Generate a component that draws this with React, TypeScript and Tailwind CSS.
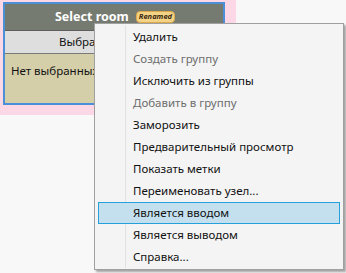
import React from "react";

type Item = { label: string; disabled?: boolean; active?: boolean };

const items: Item[] = [
    { label: "Удалить" },
    { label: "Создать группу", disabled: true },
    { label: "Исключить из группы" },
    { label: "Добавить в группу", disabled: true },
    { label: "Заморозить" },
    { label: "Предварительный просмотр" },
    { label: "Показать метки" },
    { label: "Переименовать узел..." },
    { label: "Является вводом", active: true },
    { label: "Является выводом" },
    { label: "Справка..." },
];

function ContextMenu() {
    return (
        <div className="absolute left-[94px] top-[23px] w-[250px] h-[247px] bg-[#f4f4f4] border border-[#a0a0a0] shadow-[2px_2px_2px_rgba(0,0,0,0.35)] py-[2px] px-[3px]">
            {/* icon column divider */}
            <div className="absolute left-[30px] top-[1px] bottom-[1px] w-px bg-[#e2e2e2]" />
            <div className="relative flex flex-col">
                {items.map((item) => (
                    <div
                        key={item.label}
                        className={
                            item.active
                                ? "h-[22px] flex items-center pl-[34px] bg-[#c4e0ee] border border-[#26a0da] text-[#111]"
                                : item.disabled
                                  ? "h-[22px] flex items-center pl-[35px] text-[#6d6d6d]"
                                  : "h-[22px] flex items-center pl-[35px] text-[#111]"
                        }
                    >
                        <span className="text-[11.5px] leading-none">{item.label}</span>
                    </div>
                ))}
            </div>
        </div>
    );
}

function Node() {
    return (
        <div className="w-[236px] h-[115px] bg-[#fcd8e6] pt-[2px] pl-[3px]">
            <div className="w-[222px] h-[103px] border-2 border-[#4a8fd8] flex flex-col">
                <div className="h-[26px] bg-[#767b71] flex items-center justify-center gap-[7px] pl-[2px]">
                    <span className="text-white font-bold text-[12.5px]">Select room</span>
                    <span className="bg-[#f5d386] border border-[#d9a94a] rounded-[4px] px-[2px] h-[12px] flex items-center text-[7.5px] font-bold italic text-[#3a2a10]">
                        Renamed
                    </span>
                </div>
                <div className="h-[24px] bg-[#dedede] border-t border-[#5e5e5e] border-b border-b-[#7a7a7a] flex items-center pl-[54px]">
                    <span className="text-[11.5px] text-[#111]">Выбрать комнату...</span>
                </div>
                <div className="flex-1 bg-[#d5cfa9] px-[6px] pt-[3px]">
                    <span className="text-[11.5px] text-[#111]">Нет выбранных узлов</span>
                </div>
            </div>
        </div>
    );
}

export default function App() {
    return (
        <div className="relative w-[346px] h-[273px] bg-[#f8f8f8] overflow-hidden font-['Noto_Sans',sans-serif]">
            <Node />
            <ContextMenu />
        </div>
    );
}
